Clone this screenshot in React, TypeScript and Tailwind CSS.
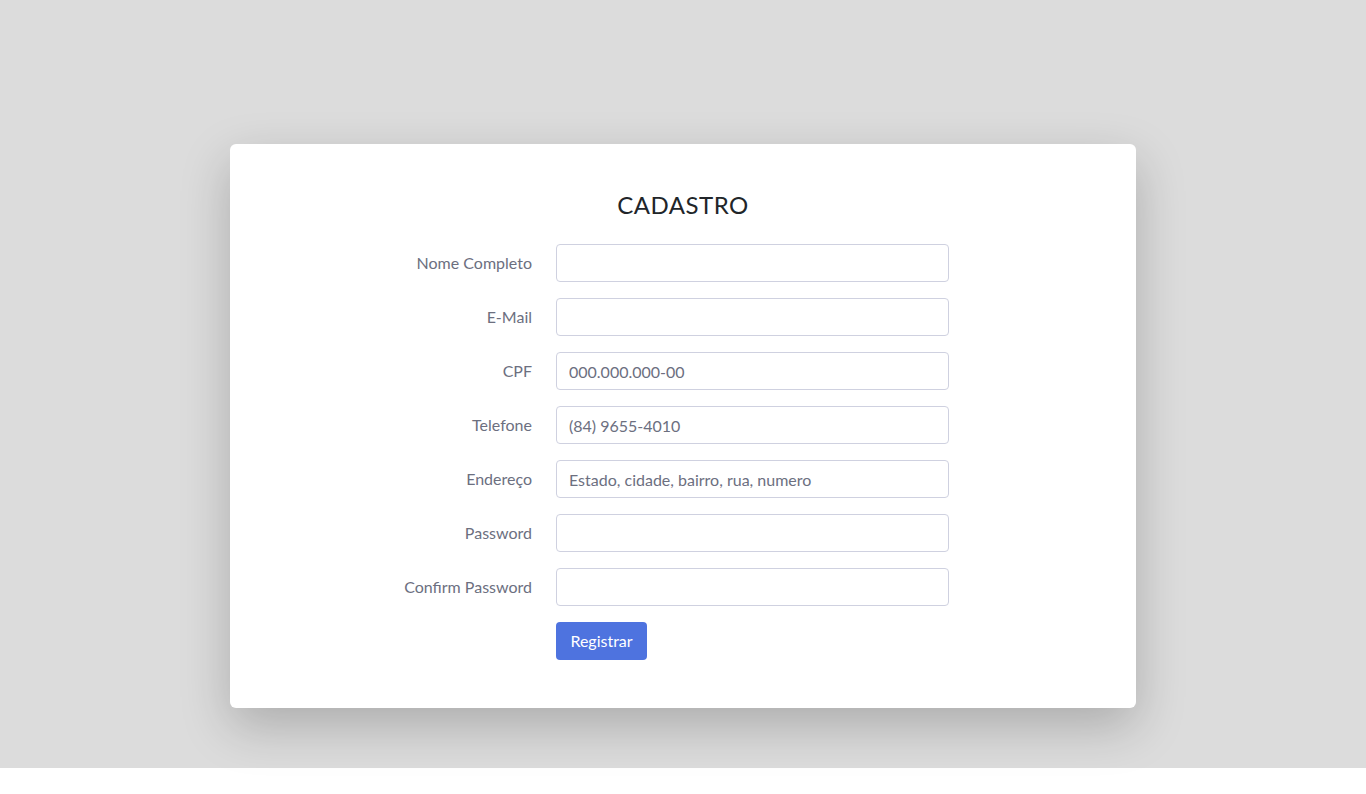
import React from "react";

const fields = [
  { label: "Nome Completo", placeholder: "" },
  { label: "E-Mail", placeholder: "" },
  { label: "CPF", placeholder: "000.000.000-00" },
  { label: "Telefone", placeholder: "(84) 9655-4010" },
  { label: "Endereço", placeholder: "Estado, cidade, bairro, rua, numero" },
  { label: "Password", placeholder: "" },
  { label: "Confirm Password", placeholder: "" },
];

export default function App() {
  return (
    <div className="min-h-[794px] bg-white font-['Lato',sans-serif]">
      <div className="h-[768px] bg-[#dcdcdc] pt-[144px]">
        <div className="mx-auto w-[906px] rounded-md bg-white pt-[46px] pb-[48px] shadow-[0_18px_50px_rgba(0,0,0,0.22)]">
          <h3 className="text-center text-[24px] leading-[30px] tracking-[0.5px] text-[#212529]">
            CADASTRO
          </h3>
          <form className="mt-[24px] flex flex-col gap-4">
            {fields.map((f) => (
              <div key={f.label} className="flex items-center">
                <label className="w-[326px] pr-[24px] text-right text-[16px] text-[#6c6f7f]">
                  {f.label}
                </label>
                <input
                  type="text"
                  placeholder={f.placeholder}
                  className="h-[38px] w-[393px] rounded-[4px] border border-[#cfd1e0] px-3 text-[16px] text-[#495057] placeholder:text-[#6c6f7f] outline-none"
                />
              </div>
            ))}
            <div className="flex pl-[326px]">
              <button
                type="button"
                className="h-[38px] w-[91px] rounded-[4px] bg-[#4e73df] text-[16px] text-white"
              >
                Registrar
              </button>
            </div>
          </form>
        </div>
      </div>
    </div>
  );
}
